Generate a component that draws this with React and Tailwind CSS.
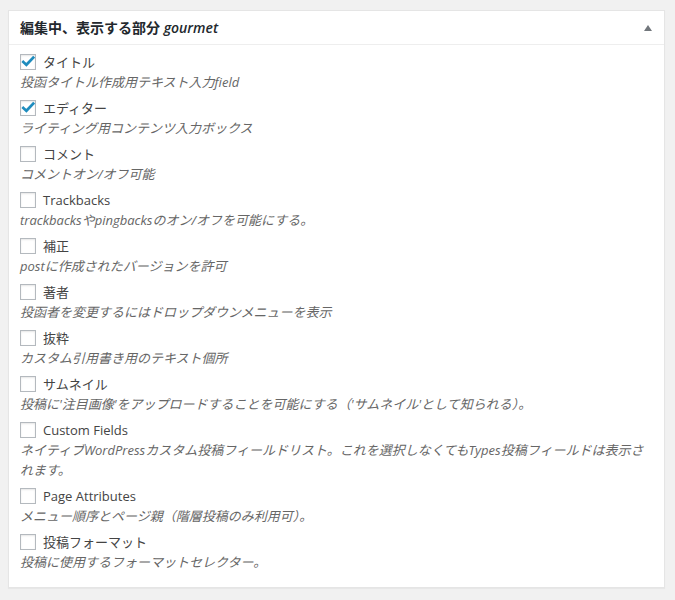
import React from "react";

const items = [
  { label: "タイトル", desc: "投函タイトル作成用テキスト入力field", checked: true },
  { label: "エディター", desc: "ライティング用コンテンツ入力ボックス", checked: true },
  { label: "コメント", desc: "コメントオン/オフ可能" },
  { label: "Trackbacks", desc: "trackbacksやpingbacksのオン/オフを可能にする。" },
  { label: "補正", desc: "postに作成されたバージョンを許可" },
  { label: "著者", desc: "投函者を変更するにはドロップダウンメニューを表示" },
  { label: "抜粋", desc: "カスタム引用書き用のテキスト個所" },
  { label: "サムネイル", desc: "投稿に'注目画像'をアップロードすることを可能にする（'サムネイル'として知られる）。" },
  {
    label: "Custom Fields",
    desc: (
      <>
        ネイティブWordPressカスタム投稿フィールドリスト。これを選択しなくてもTypes投稿フィールドは表示さ
        <br />
        れます。
      </>
    ),
  },
  { label: "Page Attributes", desc: "メニュー順序とページ親（階層投稿のみ利用可）。" },
  { label: "投稿フォーマット", desc: "投稿に使用するフォーマットセレクター。" },
];

function Checkbox({ checked }) {
  return (
    <span className="relative flex h-[16px] w-[16px] shrink-0 items-center justify-center border border-[#b4b9be] bg-white shadow-[inset_0_1px_2px_rgba(0,0,0,0.1)]">
      {checked && (
        <svg width="14" height="14" viewBox="0 0 14 14" className="absolute left-[0px] top-[0px]">
          <path d="M2.3 6.9 L5.4 9.8 L12.2 2.7" fill="none" stroke="#1e8cbe" strokeWidth="2.7" strokeLinecap="square" />
        </svg>
      )}
    </span>
  );
}

export default function App() {
  return (
    <div
      className="min-h-[600px] bg-[#f1f1f1] pl-[8px] pr-[10px] pt-[10px]"
      style={{ fontFamily: '"Open Sans", "Noto Sans CJK JP", sans-serif' }}
    >
      <div className="border border-[#e5e5e5] bg-white shadow-[0_1px_1px_rgba(0,0,0,0.04)]">
        <div className="flex h-[34px] items-center justify-between border-b border-[#eeeeee] pl-[11px] pr-[12px]">
          <h2 className="text-[14px] font-semibold leading-[20px] text-[#23282d]">
            編集中、表示する部分 <em className="italic">gourmet</em>
          </h2>
          <svg width="8" height="6" viewBox="0 0 8 6" className="mt-[1px]">
            <path d="M0 6 L4 0 L8 6 Z" fill="#72777c" />
          </svg>
        </div>
        <div className="flex flex-col gap-[6px] px-[11px] pb-[15px] pt-[7px]">
          {items.map((it, i) => (
            <div key={i} className="flex flex-col">
              <label className="flex h-[20px] items-center">
                <Checkbox checked={it.checked} />
                <span className="ml-[7px] text-[13px] leading-[20px] text-[#444]">{it.label}</span>
              </label>
              <p className="text-[13px] italic leading-[20px] text-[#666]">{it.desc}</p>
            </div>
          ))}
        </div>
      </div>
    </div>
  );
}
